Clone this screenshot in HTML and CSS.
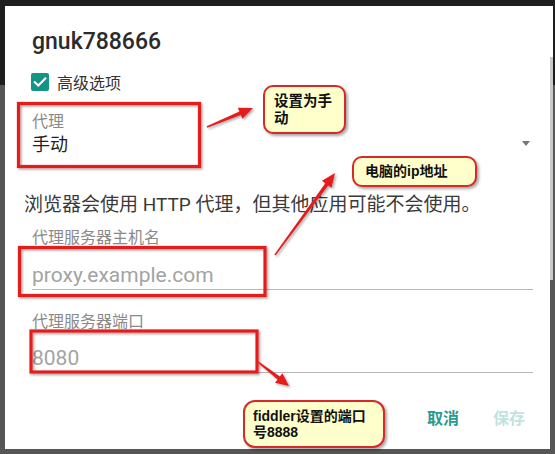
FILE: index.html
```html
<!DOCTYPE html>
<html lang="zh-CN">
<head>
<meta charset="utf-8">
<title>代理设置</title>
<link rel="stylesheet" href="styles.css">
</head>
<body>
<div class="screen">
  <div class="dialog">
    <h1 class="title">gnuk788666</h1>
    <div class="check-row">
      <span class="checkbox">
        <svg width="18" height="18" viewBox="0 0 18 18"><rect x="0" y="0" width="18" height="18" rx="2" fill="#139487"/><path d="M3.8 9.2 L7.3 12.6 L14.3 5.4" fill="none" stroke="#fff" stroke-width="2.1" stroke-linecap="square"/></svg>
      </span>
      <span class="check-label">高级选项</span>
    </div>
    <div class="field-label">代理</div>
    <div class="spinner"><span class="spinner-value">手动</span><span class="caret"></span></div>
    <p class="note">浏览器会使用 HTTP 代理，但其他应用可能不会使用。</p>
    <div class="field-label label-host">代理服务器主机名</div>
    <div class="input input-host">proxy.example.com</div>
    <div class="field-label label-port">代理服务器端口</div>
    <div class="input input-port">8080</div>
    <div class="actions"><span class="btn">取消</span><span class="btn btn-disabled">保存</span></div>
  </div>
  <div class="scrollbar"></div>
</div>

<svg class="annotations" width="555" height="454" viewBox="0 0 555 454">
  <defs>
    <filter id="sh" x="-20%" y="-20%" width="140%" height="140%">
      <feDropShadow dx="1.5" dy="1.5" stdDeviation="1" flood-color="#000" flood-opacity="0.35"/>
    </filter>
  </defs>
  <g fill="none" stroke="#e41e1e" stroke-width="3.2" filter="url(#sh)">
    <rect x="18.5" y="103.5" width="181" height="63"/>
    <rect x="19.5" y="247.5" width="245.5" height="48"/>
    <rect x="31" y="331" width="226" height="41"/>
  </g>
  <g fill="#e41e1e" filter="url(#sh)">
    <polygon points="207.3,127.7 240.8,115.0 242.4,118.8 253,108 237.8,107.8 239.4,111.6 206.7,126.3"/>
    <polygon points="275.6,255.5 328.2,185.4 331.5,187.8 335,173 321.9,180.8 325.3,183.2 274.4,254.5"/>
    <polygon points="257.5,362.6 277.6,379.4 275.0,382.7 289,386 282.4,373.3 279.8,376.6 258.5,361.4"/>
  </g>
</svg>

<div class="callout callout-manual">设置为手<br>动</div>
<div class="callout callout-ip">电脑的ip地址</div>
<div class="callout callout-port">fiddler设置的端口<br>号8888</div>
</body>
</html>
```

FILE: styles.css
```css
* { box-sizing: border-box; }

html, body {
  margin: 0;
  padding: 0;
}

body {
  width: 555px;
  height: 454px;
  overflow: hidden;
  position: relative;
  background: linear-gradient(to bottom, #1e1e1e 0, #1e1e1e 85px, #565656 85px, #565656 100%);
  font-family: Roboto, "Noto Sans CJK SC", sans-serif;
}

.screen {
  display: flex;
  align-items: flex-start;
  padding: 6px 0 0 5px;
}

.dialog {
  width: 545px;
  height: 443px;
  background: #ffffff;
  padding: 22px 17px 0 27px;
}

.title {
  margin: 0;
  font-family: Roboto, sans-serif;
  font-size: 23px;
  font-weight: 500;
  line-height: 28px;
  color: #2b2b2b;
}

.check-row {
  display: flex;
  align-items: center;
  height: 24px;
  margin-top: 14px;
  margin-left: -1px;
  gap: 8px;
}

.checkbox {
  display: flex;
  width: 18px;
  height: 18px;
}

.check-label {
  font-family: "Noto Sans CJK SC", sans-serif;
  font-size: 16px;
  line-height: 24px;
  color: #333333;
}

.field-label {
  font-family: "Noto Sans CJK SC", sans-serif;
  font-size: 16px;
  line-height: 20px;
  color: #8a8a8a;
  margin-top: 16px;
}

.spinner {
  display: flex;
  align-items: center;
  justify-content: space-between;
  margin-top: 1px;
  height: 24px;
}

.spinner-value {
  font-family: "Noto Sans CJK SC", sans-serif;
  font-size: 18px;
  line-height: 24px;
  color: #222222;
}

.caret {
  width: 0;
  height: 0;
  margin-right: 3px;
  border-left: 4px solid transparent;
  border-right: 4px solid transparent;
  border-top: 5px solid #777777;
}

.note {
  margin: 37px 0 0 -8px;
  font-family: Roboto, "Noto Sans CJK SC", sans-serif;
  font-size: 19px;
  line-height: 26px;
  color: #3a3a3a;
  white-space: nowrap;
}

.label-host { margin-top: 8px; }

.input {
  font-family: Roboto, sans-serif;
  font-size: 21px;
  line-height: 28px;
  height: 29px;
  color: #a3a3a3;
  border-bottom: 1px solid #b8b8b8;
}

.input-host { margin-top: 15px; }

.label-port { margin-top: 20px; }

.input-port { margin-top: 14px; }

.actions {
  display: flex;
  justify-content: flex-end;
  gap: 34px;
  margin-top: 34px;
  padding-right: 8px;
}

.btn {
  font-family: "Noto Sans CJK SC", sans-serif;
  font-size: 16px;
  font-weight: 700;
  line-height: 20px;
  color: #2a9a8f;
}

.btn-disabled { color: #bfe3df; }

.scrollbar {
  width: 3px;
  height: 274px;
  background: linear-gradient(to bottom, #ffffff 0, #ffffff 51px, #c9c9c9 51px, #c9c9c9 100%);
}

.annotations {
  position: absolute;
  left: 0;
  top: 0;
  pointer-events: none;
}

.callout {
  position: absolute;
  background: #ffffcc;
  border: 2px solid #d62a2a;
  border-radius: 10px;
  box-shadow: 2px 2px 3px rgba(0, 0, 0, 0.35);
  font-family: "Liberation Sans", "Noto Sans CJK SC", sans-serif;
  font-weight: 700;
  font-size: 14px;
  color: #111111;
  white-space: nowrap;
}

.callout-manual {
  left: 263px;
  top: 85px;
  width: 83px;
  height: 49px;
  padding: 6px 0 0 9px;
  font-size: 14.5px;
  line-height: 17px;
}

.callout-ip {
  left: 352px;
  top: 156px;
  width: 125px;
  height: 31px;
  padding: 0 0 0 11px;
  line-height: 27px;
}

.callout-port {
  left: 243px;
  top: 400px;
  width: 142px;
  height: 48px;
  padding: 6px 0 0 8px;
  line-height: 16px;
  border-radius: 12px;
}
```
